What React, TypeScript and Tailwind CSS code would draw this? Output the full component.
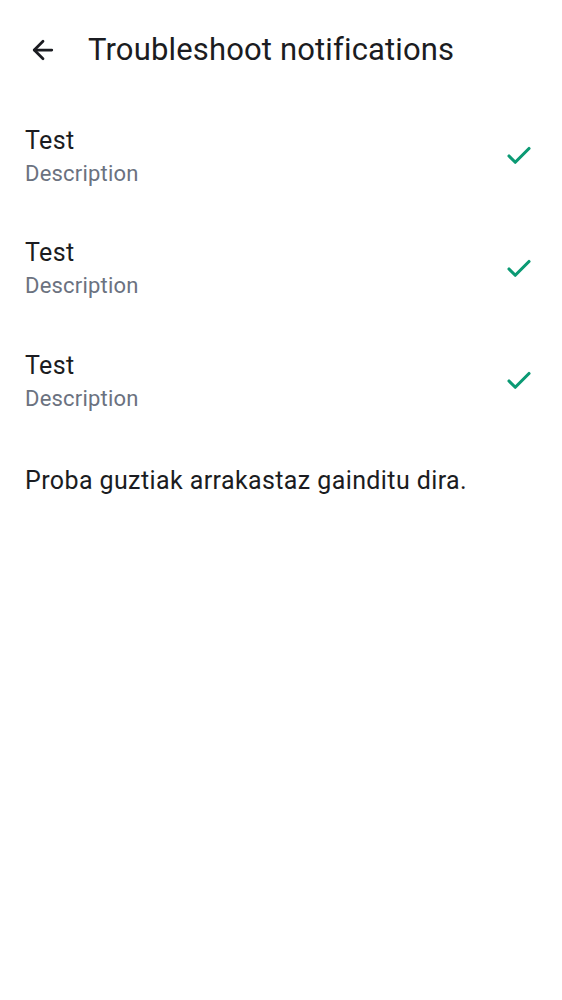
import { ArrowLeft, Check } from "lucide-react";

const tests = [
  { title: "Test", desc: "Description" },
  { title: "Test", desc: "Description" },
  { title: "Test", desc: "Description" },
];

export default function App() {
  return (
    <div className="min-h-screen bg-white" style={{ fontFamily: "Roboto, sans-serif" }}>
      {/* Top bar */}
      <div className="flex items-center h-[100px] px-[28px]">
        <ArrowLeft size={30} strokeWidth={2.2} className="text-[#1b1c21]" />
        <h1 className="ml-[30px] text-[31px] text-[#1b1c21] font-normal tracking-[0.15px]">
          Troubleshoot notifications
        </h1>
      </div>

      {/* Tests */}
      <div className="flex flex-col">
        {tests.map((t, i) => (
          <div key={i} className="flex items-center h-[112.5px] pl-[25px] pr-[28px]">
            <div className="flex-1 flex flex-col pt-[2px]">
              <span className="text-[25px] leading-[32px] text-[#1b1c21] tracking-[0.4px]">{t.title}</span>
              <span className="text-[22px] leading-[33px] text-[#6b7280] tracking-[0.2px]">{t.desc}</span>
            </div>
            <Check size={30} strokeWidth={2.5} className="text-[#0b9a74]" />
          </div>
        ))}
      </div>

      <p className="px-[25px] pt-[26px] text-[25px] leading-[34px] text-[#1b1c21] tracking-[0.4px]">
        Proba guztiak arrakastaz gainditu dira.
      </p>
    </div>
  );
}
